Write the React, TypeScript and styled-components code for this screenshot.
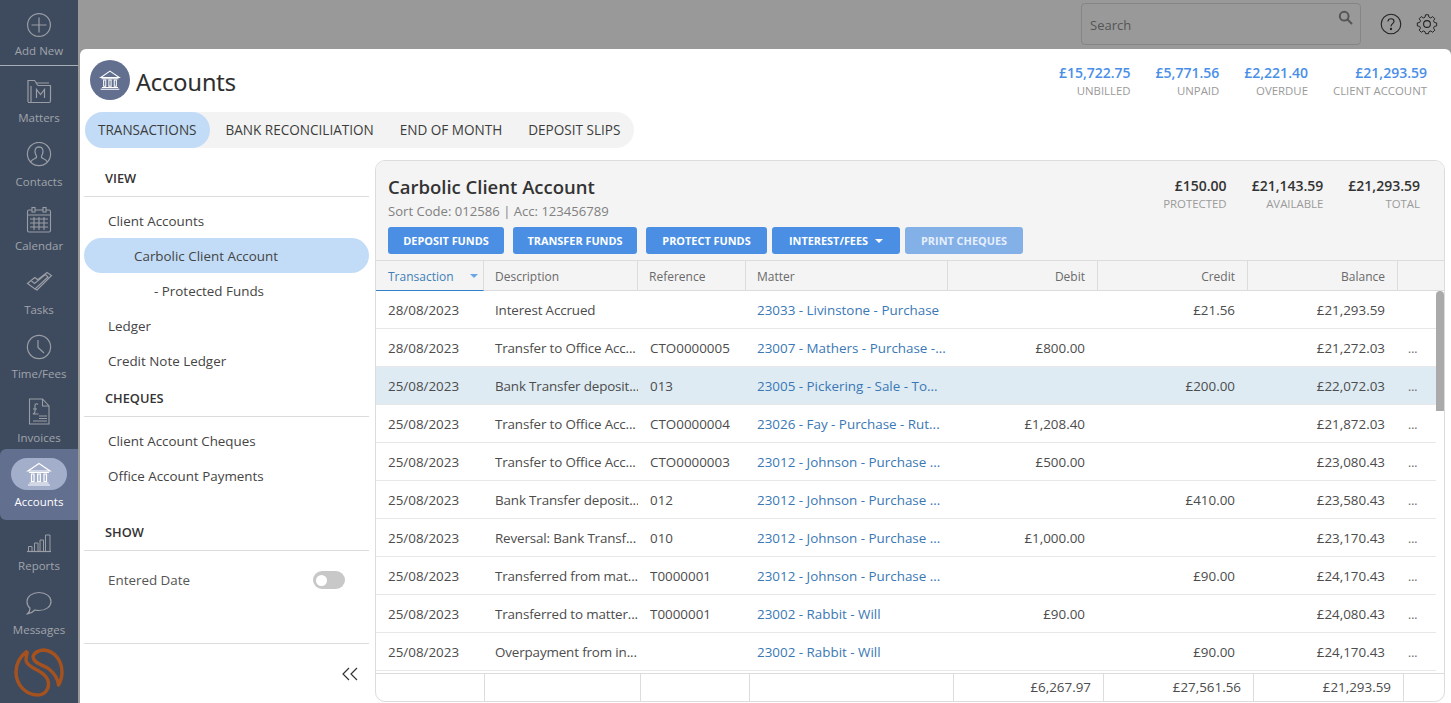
import React from 'react';
import styled, { createGlobalStyle } from 'styled-components';

const GlobalStyle = createGlobalStyle`
    html, body {
        margin: 0;
        padding: 0;
        height: 100%;
        overflow: hidden;
        background: #999;
    }
    * {
        box-sizing: border-box;
    }
    body {
        font-family: "Open Sans", "Noto Sans", "Liberation Sans", sans-serif;
        font-size: 13.4px;
        color: #444;
    }
`;

const Page = styled.div`
    display: flex;
    height: 703px;
    overflow: hidden;
    background: #999;
`;

const Sidebar = styled.nav`
    display: flex;
    flex-direction: column;
    flex: 0 0 78px;
    background: #3e4b5f;
`;

const NavItem = styled.div<{ $active?: boolean; $first?: boolean }>`
    display: flex;
    flex-direction: column;
    align-items: center;
    position: relative;
    height: ${p => (p.$first ? '66px' : p.$active ? '71px' : '64px')};
    padding-top: ${p => (p.$first ? '11px' : p.$active ? '9px' : '12px')};
    margin-top: ${p => (p.$active ? '-1px' : '0')};
    margin-bottom: ${p => (p.$active ? '-6px' : '0')};
    border-bottom: ${p => (p.$first ? '1px solid #a9aeb6' : 'none')};
    border-radius: ${p => (p.$active ? '6px 0 0 6px' : '0')};
    background: ${p => (p.$active ? '#626f8f' : 'transparent')};
    color: ${p => (p.$active ? '#fff' : '#a0a4aa')};
    font-weight: ${p => (p.$active ? 500 : 400)};
`;

const NavIcon = styled.div<{ $active?: boolean }>`
    display: flex;
    align-items: center;
    justify-content: center;
    width: 56px;
    height: ${p => (p.$active ? '32px' : '28px')};
    margin-bottom: 4px;
    border-radius: 16px;
    background: ${p => (p.$active ? '#a3aecb' : 'transparent')};
`;

const NavLabel = styled.div`
    font-size: 11.5px;
    line-height: 16px;
    white-space: nowrap;
`;

const Logo = styled.svg`
    display: block;
    width: 50px;
    height: 50px;
    margin: 6px auto 0;
`;

const Main = styled.div`
    display: flex;
    flex-direction: column;
    flex: 1;
    min-width: 0;
`;

const TopBar = styled.header`
    display: flex;
    align-items: center;
    justify-content: flex-end;
    flex: 0 0 49px;
    padding: 3px 12px 4px 0;
`;

const SearchBox = styled.div`
    position: relative;
    width: 280px;
    height: 42px;
    padding: 12px 8px 0;
    margin-right: 18px;
    border: 1px solid #858585;
    border-radius: 4px;
    color: #555;
    font-size: 13px;
    line-height: 18px;
`;

const SearchIcon = styled.svg`
    position: absolute;
    top: 6px;
    right: 7px;
    width: 15px;
    height: 15px;
`;

const TopIcon = styled.svg`
    display: block;
    width: 24px;
    height: 24px;
    & + & {
        margin-left: 12px;
    }
`;

const Panel = styled.main`
    display: flex;
    flex-direction: column;
    flex: 1;
    min-height: 0;
    margin-left: 2px;
    background: #fff;
    border-radius: 6px 6px 0 0;
`;

const PanelHead = styled.div`
    display: flex;
    justify-content: space-between;
    flex: 0 0 63px;
    padding: 11px 24px 0 10px;
`;

const TitleRow = styled.div`
    display: flex;
    align-items: center;
    height: 40px;
`;

const TitleBadge = styled.div`
    display: flex;
    align-items: center;
    justify-content: center;
    width: 40px;
    height: 40px;
    margin-right: 6px;
    border-radius: 50%;
    background: #626f8f;
`;

const Title = styled.h1`
    margin: 3px 0 0;
    font-size: 23.5px;
    font-weight: 400;
    color: #2b2b2b;
    -webkit-text-stroke: 0.2px #2b2b2b;
`;

const Stats = styled.div<{ $inCard?: boolean }>`
    display: flex;
    gap: 25px;
    margin-top: ${p => (p.$inCard ? '1px' : '3px')};
`;

const Stat = styled.div`
    text-align: right;
`;

const StatValue = styled.div<{ $dark?: boolean }>`
    font-size: 14px;
    line-height: 19px;
    font-weight: 600;
    color: ${p => (p.$dark ? '#333' : '#4a8fe7')};
`;

const StatLabel = styled.div`
    font-size: 11.4px;
    line-height: 17px;
    color: #9a9a9a;
    white-space: nowrap;
`;

const Tabs = styled.div`
    display: flex;
    align-self: flex-start;
    height: 36px;
    margin-left: 5px;
    padding-right: 1px;
    border-radius: 18px;
    background: #f3f3f3;
`;

const Tab = styled.div<{ $active?: boolean }>`
    display: flex;
    align-items: center;
    margin-right: ${p => (p.$active ? '3px' : '0')};
    padding: 0 13px;
    border-radius: 18px;
    background: ${p => (p.$active ? '#c2dcf7' : 'transparent')};
    color: #3c3c3c;
    font-size: 13.55px;
    white-space: nowrap;
`;

const Body = styled.div`
    display: flex;
    flex: 1;
    min-height: 0;
    padding: 12px 6px 1px 4px;
`;

const SideNav = styled.aside`
    display: flex;
    flex-direction: column;
    flex: 0 0 285px;
    margin-right: 6px;
    margin-bottom: -1px;
`;

const SectionHead = styled.div<{ $gap?: number }>`
    height: 37px;
    margin-top: ${p => p.$gap ?? 0}px;
    padding: 9px 0 0 21px;
    border-bottom: 1px solid #dcdcdc;
    color: #333;
    font-size: 12.8px;
    line-height: 18px;
    font-weight: 600;
`;

const SectionList = styled.div`
    padding-top: 6px;
`;

const SideLink = styled.div<{ $level?: number; $active?: boolean }>`
    display: flex;
    align-items: center;
    height: 35px;
    padding-left: ${p => [24, 50, 70][p.$level ?? 0]}px;
    border-radius: 18px;
    background: ${p => (p.$active ? '#c2dcf7' : 'transparent')};
    color: #444;
    font-size: 13.4px;
`;

const ToggleRow = styled.div`
    display: flex;
    align-items: center;
    justify-content: space-between;
    height: 46px;
    padding: 0 24px;
    color: #555;
    font-size: 13.4px;
`;

const Toggle = styled.div`
    display: flex;
    align-items: center;
    width: 32px;
    height: 18px;
    padding-left: 3px;
    border-radius: 9px;
    background: #c8c8c8;
    &::before {
        content: '';
        width: 11px;
        height: 11px;
        border-radius: 50%;
        background: #fff;
    }
`;

const SideFoot = styled.div`
    display: flex;
    align-items: center;
    justify-content: flex-end;
    margin-top: auto;
    height: 60px;
    padding: 0 10px 0 0;
    border-top: 1px solid #dcdcdc;
`;

const Card = styled.section`
    display: flex;
    flex-direction: column;
    flex: 1;
    min-width: 0;
    overflow: hidden;
    border: 1px solid #dcdcdc;
    border-radius: 10px;
`;

const CardHead = styled.div`
    display: flex;
    justify-content: space-between;
    flex: 0 0 99px;
    padding: 14px 24px 0 12px;
    background: #f4f4f4;
`;

const CardTitle = styled.h2`
    margin: 0;
    font-size: 18.5px;
    line-height: 24px;
    font-weight: 600;
    color: #333;
`;

const CardSub = styled.div`
    margin-top: 3px;
    color: #808080;
    font-size: 13.1px;
    line-height: 18px;
`;

const Buttons = styled.div`
    display: flex;
    margin-top: 7px;
`;

const ButtonGroup = styled.div<{ $gap: number }>`
    display: flex;
    gap: ${p => p.$gap}px;
    margin-right: 5px;
`;

const Button = styled.div<{ $w: number; $disabled?: boolean }>`
    display: flex;
    align-items: center;
    justify-content: center;
    width: ${p => p.$w}px;
    height: 27px;
    border-radius: 3px;
    background: ${p => (p.$disabled ? '#84b0e8' : '#4a8fe3')};
    color: ${p => (p.$disabled ? '#e6effb' : '#fff')};
    font-size: 10.9px;
    font-weight: 700;
    white-space: nowrap;
`;

const Caret = styled.span<{ $color: string }>`
    width: 0;
    height: 0;
    margin-left: 7px;
    border-left: 4px solid transparent;
    border-right: 4px solid transparent;
    border-top: 4px solid ${p => p.$color};
`;

const HeadRow = styled.div`
    display: grid;
    grid-template-columns: 108px 154px 108px 202px 150px 150px 150px 1fr;
    flex: 0 0 31px;
    background: #f4f4f4;
    border-top: 1px solid #dcdcdc;
    border-bottom: 1px solid #dcdcdc;
`;

const HeadCell = styled.div<{ $right?: boolean; $sorted?: boolean }>`
    display: flex;
    align-items: center;
    justify-content: ${p => (p.$right ? 'flex-end' : 'space-between')};
    margin-bottom: ${p => (p.$sorted ? '-1px' : '0')};
    padding: 1px ${p => (p.$sorted ? '5px' : '12px')} 0 ${p => (p.$sorted ? '12px' : '11px')};
    border-right: 1px solid #dcdcdc;
    border-bottom: ${p => (p.$sorted ? '1px solid #2f7fc9' : 'none')};
    color: ${p => (p.$sorted ? '#3f7fb8' : '#6a6a6a')};
    font-size: 12px;
`;

const Rows = styled.div`
    position: relative;
    flex: 1;
    min-height: 0;
    overflow: hidden;
    padding-right: 8px;
`;

const Thumb = styled.div`
    position: absolute;
    top: 0;
    right: 0;
    width: 8px;
    height: 120px;
    border-radius: 4px 4px 0 0;
    background: #aaa;
`;

const Row = styled.div<{ $selected?: boolean }>`
    display: grid;
    grid-template-columns: 107px 155px 107px 202px 150px 150px 150px 1fr;
    height: 38px;
    border-bottom: 1px solid #e8e8e8;
    background: ${p => (p.$selected ? '#deebf3' : 'transparent')};
`;

const Cell = styled.div<{ $right?: boolean; $link?: boolean; $tight?: boolean }>`
    overflow: hidden;
    padding: 0 ${p => (p.$right ? '12px' : '0')} 0 ${p => (p.$right ? '0' : '12px')};
    color: ${p => (p.$link ? '#3a78b5' : '#4c4c4c')};
    font-size: 13.4px;
    letter-spacing: ${p => (p.$tight ? '-0.14px' : '0')};
    line-height: 38px;
    text-align: ${p => (p.$right ? 'right' : 'left')};
    white-space: nowrap;
`;

const More = styled.div`
    padding-left: 11px;
    color: #666;
    font-size: 12px;
    line-height: 40px;
`;

const Footer = styled.div`
    display: grid;
    grid-template-columns: 109px 156px 109px 204px 150px 150px 150px 1fr;
    flex: 0 0 28px;
    border-top: 1px solid #dcdcdc;
`;

const FootCell = styled.div`
    padding-right: 12px;
    border-right: 1px solid #dcdcdc;
    color: #4c4c4c;
    font-size: 13.4px;
    line-height: 27px;
    text-align: right;
`;

type IconProps = { color?: string; size?: number };

const BankIcon = ({ color = '#fff', size = 26 }: IconProps) => (
    <svg width={size} height={size} viewBox="0 0 26 26" fill="none" stroke={color} strokeWidth="1.2">
        <path d="M13 2.5 L24 10 H2 Z" />
        <path d="M3 11.5 H23 M3.5 22 H22.5 M2 24 H24" />
        <path d="M5.5 13 V20.5 M8 13 V20.5 M11.7 13 V20.5 M14.3 13 V20.5 M18 13 V20.5 M20.5 13 V20.5 M5 13 H8.5 M11 13 H15 M17.5 13 H21 M5 20.5 H8.5 M11 20.5 H15 M17.5 20.5 H21" />
    </svg>
);

const stroke = '#9a9da3';

const icons: Record<string, React.ReactNode> = {
    add: (
        <svg width="28" height="28" viewBox="0 0 28 28" fill="none" stroke={stroke} strokeWidth="1.2">
            <circle cx="14" cy="14" r="11.4" />
            <path d="M14 6.5 V21.5 M6.5 14 H21.5" />
        </svg>
    ),
    matters: (
        <svg width="28" height="28" viewBox="0 0 28 28" fill="none" stroke={stroke} strokeWidth="1.2">
            <path d="M3 24 V2.5 H9.5 L11.5 5 H24" />
            <path d="M6 24.5 H24 Q25.5 24.5 25.5 23 V7.5 H13 L11 5" />
            <path d="M3 24.5 H6 V8" />
            <path d="M11.5 20 V11.5 L15.5 16.5 L19.5 11.5 V20" />
        </svg>
    ),
    contacts: (
        <svg width="28" height="28" viewBox="0 0 28 28" fill="none" stroke={stroke} strokeWidth="1.2">
            <g transform="translate(0 -2)">
                <circle cx="14" cy="14" r="11.6" />
                <path d="M5.5 22 C7 19 10.5 18.5 11.5 17.5 C12 16.5 11 15.5 10.5 14 C9.5 11 9.8 7 14 6.8 C18.2 7 18.5 11 17.5 14 C17 15.5 16 16.5 16.5 17.5 C17.5 18.5 21 19 22.5 22" />
            </g>
        </svg>
    ),
    calendar: (
        <svg width="28" height="28" viewBox="0 0 28 28" fill="none" stroke={stroke} strokeWidth="1.1">
            <rect x="2.5" y="4" width="23" height="22" rx="1.5" />
            <rect x="7" y="1.5" width="3" height="4.5" fill="#3e4b5f" />
            <rect x="18" y="1.5" width="3" height="4.5" fill="#3e4b5f" />
            <path d="M2.5 9 H25.5 M5 13 H23 M5 17 H23 M5 21 H23 M9 11 V24 M14 11 V24 M19 11 V24" />
        </svg>
    ),
    tasks: (
        <svg width="28" height="28" viewBox="0 0 28 28" fill="none" stroke={stroke} strokeWidth="1.2">
            <path d="M2.5 13.5 L6 10.5 L9.5 13.5 L20.5 4.5 L23 7 L10 19 Z" />
            <path d="M6.5 10 L10 7.5 L13 10" />
            <path d="M13 9.5 L22 2.5 L26.5 5.5 L12 20 L10 19" />
        </svg>
    ),
    time: (
        <svg width="28" height="28" viewBox="0 0 28 28" fill="none" stroke={stroke} strokeWidth="1.2">
            <circle cx="14" cy="13" r="11.6" />
            <path d="M13 6 V13.5 L19 19" />
        </svg>
    ),
    invoices: (
        <svg width="28" height="28" viewBox="0 0 28 28" fill="none" stroke={stroke} strokeWidth="1.1">
            <path d="M4.5 1 H17.5 L24 8 V26 H4.5 Z" />
            <path d="M17.5 1 V8 H24" />
            <path d="M14 18 H22 M14 20.5 H22 M8 23 H22" />
            <path d="M13 6.5 C11.5 5 9.5 6 10 8 L10 13.5 C10 15 9 15.5 8 16 H13.5 M8 11 H12" />
        </svg>
    ),
    reports: (
        <svg width="28" height="28" viewBox="0 0 28 28" fill="none" stroke={stroke} strokeWidth="1">
            <path d="M2 25.5 H26" strokeWidth="1.2" />
            <path d="M3.5 25 V20.5 H7 V25 M9.5 25 V17 H13 V25 M15 25 V14 H18.5 V25 M20.5 25 V9 H25 V25" />
        </svg>
    ),
    messages: (
        <svg width="28" height="28" viewBox="0 0 28 28" fill="none" stroke={stroke} strokeWidth="1.2">
            <path d="M14 2.5 C21 2.5 26 6.5 26 11.5 C26 16.5 21 20.5 14 20.5 C12.5 20.5 11 20.3 9.8 20 C8 22 5.5 23.5 2.5 23.8 C4.5 22 5 20.3 5 18.2 C3 16.5 2 14.2 2 11.5 C2 6.5 7 2.5 14 2.5 Z" />
        </svg>
    ),
};

const navItems = [
    { key: 'matters', label: 'Matters' },
    { key: 'contacts', label: 'Contacts' },
    { key: 'calendar', label: 'Calendar' },
    { key: 'tasks', label: 'Tasks' },
    { key: 'time', label: 'Time/Fees' },
    { key: 'invoices', label: 'Invoices' },
    { key: 'accounts', label: 'Accounts' },
    { key: 'reports', label: 'Reports' },
    { key: 'messages', label: 'Messages' },
];

const transactions = [
    ['28/08/2023', 'Interest Accrued', '', '23033 - Livinstone - Purchase', '', '£21.56', '£21,293.59', false],
    ['28/08/2023', 'Transfer to Office Acc...', 'CTO0000005', '23007 - Mathers - Purchase -...', '£800.00', '', '£21,272.03', true],
    ['25/08/2023', 'Bank Transfer deposit...', '013', '23005 - Pickering - Sale - To...', '', '£200.00', '£22,072.03', true],
    ['25/08/2023', 'Transfer to Office Acc...', 'CTO0000004', '23026 - Fay - Purchase - Rut...', '£1,208.40', '', '£21,872.03', true],
    ['25/08/2023', 'Transfer to Office Acc...', 'CTO0000003', '23012 - Johnson - Purchase ...', '£500.00', '', '£23,080.43', true],
    ['25/08/2023', 'Bank Transfer deposit...', '012', '23012 - Johnson - Purchase ...', '', '£410.00', '£23,580.43', true],
    ['25/08/2023', 'Reversal: Bank Transf...', '010', '23012 - Johnson - Purchase ...', '£1,000.00', '', '£23,170.43', true],
    ['25/08/2023', 'Transferred from mat...', 'T0000001', '23012 - Johnson - Purchase ...', '', '£90.00', '£24,170.43', true],
    ['25/08/2023', 'Transferred to matter...', 'T0000001', '23002 - Rabbit - Will', '£90.00', '', '£24,080.43', true],
    ['25/08/2023', 'Overpayment from in...', '', '23002 - Rabbit - Will', '', '£90.00', '£24,170.43', true],
] as const;

const App: React.FC = () => {
    return (
        <Page>
            <GlobalStyle />
            <Sidebar>
                <NavItem $first>
                    <NavIcon>{icons.add}</NavIcon>
                    <NavLabel>Add New</NavLabel>
                </NavItem>
                {navItems.map(item => {
                    const active = item.key === 'accounts';
                    return (
                        <NavItem key={item.key} $active={active}>
                            <NavIcon $active={active}>
                                {active ? <BankIcon size={26} /> : icons[item.key]}
                            </NavIcon>
                            <NavLabel>{item.label}</NavLabel>
                        </NavItem>
                    );
                })}
                <Logo viewBox="0 0 50 50" fill="none" stroke="#a5521f" strokeWidth="3.4" strokeLinejoin="round">
                    <path d="M13.5 3 C5 9 2 17 2 24 C2 37 12 47 24 47 C31 47 35 41 34.5 35 C34 29 29 25 23 22 C17 19 12 16 12 12 C12 8 13 5 13.5 3" />
                    <path d="M19 9 C20 4 26 2 30 2 C40 3 48 12 48 24 C48 29 47 33 44.5 37 C44 31 41 26 35 21 C30 17 20 16 19 9 Z" />
                </Logo>
            </Sidebar>
            <Main>
                <TopBar>
                    <SearchBox>
                        Search
                        <SearchIcon viewBox="0 0 15 15" fill="none" stroke="#555" strokeWidth="2">
                            <circle cx="6.2" cy="6.2" r="4.4" />
                            <path d="M9.5 9.5 L13.5 13.5" strokeLinecap="round" />
                        </SearchIcon>
                    </SearchBox>
                    <TopIcon viewBox="0 0 24 24" fill="none" stroke="#222" strokeWidth="1.1">
                        <circle cx="12" cy="12" r="9.8" />
                        <path d="M9 9.5 C9 7.5 10.5 6.7 12 6.7 C13.7 6.7 15 7.8 15 9.4 C15 11.6 12 11.8 12 14.5" />
                        <circle cx="12" cy="17" r="0.6" fill="#222" />
                    </TopIcon>
                    <TopIcon viewBox="0 0 24 24" fill="none" stroke="#222" strokeWidth="1.1">
                        <circle cx="12" cy="12" r="3.4" />
                        <path d="M10.3 2.5 h3.4 l0.5 2.7 2 0.9 2.3 -1.5 2.4 2.4 -1.5 2.3 0.9 2 2.7 0.5 v3.4 l-2.7 0.5 -0.9 2 1.5 2.3 -2.4 2.4 -2.3 -1.5 -2 0.9 -0.5 2.2 h-3.4 l-0.5 -2.2 -2 -0.9 -2.3 1.5 -2.4 -2.4 1.5 -2.3 -0.9 -2 -2.7 -0.5 v-3.4 l2.7 -0.5 0.9 -2 -1.5 -2.3 2.4 -2.4 2.3 1.5 2 -0.9 z" strokeLinejoin="round" transform="translate(12 12) scale(0.88) translate(-12 -13)" />
                    </TopIcon>
                </TopBar>
                <Panel>
                    <PanelHead>
                        <TitleRow>
                            <TitleBadge>
                                <BankIcon size={22} />
                            </TitleBadge>
                            <Title>Accounts</Title>
                        </TitleRow>
                        <Stats>
                            <Stat>
                                <StatValue>£15,722.75</StatValue>
                                <StatLabel>UNBILLED</StatLabel>
                            </Stat>
                            <Stat>
                                <StatValue>£5,771.56</StatValue>
                                <StatLabel>UNPAID</StatLabel>
                            </Stat>
                            <Stat>
                                <StatValue>£2,221.40</StatValue>
                                <StatLabel>OVERDUE</StatLabel>
                            </Stat>
                            <Stat>
                                <StatValue>£21,293.59</StatValue>
                                <StatLabel>CLIENT ACCOUNT</StatLabel>
                            </Stat>
                        </Stats>
                    </PanelHead>
                    <Tabs>
                        <Tab $active>TRANSACTIONS</Tab>
                        <Tab>BANK RECONCILIATION</Tab>
                        <Tab>END OF MONTH</Tab>
                        <Tab>DEPOSIT SLIPS</Tab>
                    </Tabs>
                    <Body>
                        <SideNav>
                            <SectionHead>VIEW</SectionHead>
                            <SectionList>
                                <SideLink>Client Accounts</SideLink>
                                <SideLink $level={1} $active>Carbolic Client Account</SideLink>
                                <SideLink $level={2}>- Protected Funds</SideLink>
                                <SideLink>Ledger</SideLink>
                                <SideLink>Credit Note Ledger</SideLink>
                            </SectionList>
                            <SectionHead $gap={2}>CHEQUES</SectionHead>
                            <SectionList>
                                <SideLink>Client Account Cheques</SideLink>
                                <SideLink>Office Account Payments</SideLink>
                            </SectionList>
                            <SectionHead $gap={21}>SHOW</SectionHead>
                            <SectionList>
                                <ToggleRow>
                                    Entered Date
                                    <Toggle />
                                </ToggleRow>
                            </SectionList>
                            <SideFoot>
                                <svg width="18" height="14" viewBox="0 0 18 14" fill="none" stroke="#333" strokeWidth="1.2">
                                    <path d="M8 1 L2 7 L8 13 M16 1 L10 7 L16 13" />
                                </svg>
                            </SideFoot>
                        </SideNav>
                        <Card>
                            <CardHead>
                                <div>
                                    <CardTitle>Carbolic Client Account</CardTitle>
                                    <CardSub>Sort Code: 012586 | Acc: 123456789</CardSub>
                                    <Buttons>
                                        <ButtonGroup $gap={9}>
                                            <Button $w={116}>DEPOSIT FUNDS</Button>
                                            <Button $w={124}>TRANSFER FUNDS</Button>
                                            <Button $w={121}>PROTECT FUNDS</Button>
                                        </ButtonGroup>
                                        <ButtonGroup $gap={5}>
                                            <Button $w={128}>
                                                INTEREST/FEES
                                                <Caret $color="#fff" />
                                            </Button>
                                            <Button $w={118} $disabled>PRINT CHEQUES</Button>
                                        </ButtonGroup>
                                    </Buttons>
                                </div>
                                <Stats $inCard>
                                    <Stat>
                                        <StatValue $dark>£150.00</StatValue>
                                        <StatLabel>PROTECTED</StatLabel>
                                    </Stat>
                                    <Stat>
                                        <StatValue $dark>£21,143.59</StatValue>
                                        <StatLabel>AVAILABLE</StatLabel>
                                    </Stat>
                                    <Stat>
                                        <StatValue $dark>£21,293.59</StatValue>
                                        <StatLabel>TOTAL</StatLabel>
                                    </Stat>
                                </Stats>
                            </CardHead>
                            <HeadRow>
                                <HeadCell $sorted>
                                    Transaction
                                    <Caret $color="#6aa5e8" />
                                </HeadCell>
                                <HeadCell>Description</HeadCell>
                                <HeadCell>Reference</HeadCell>
                                <HeadCell>Matter</HeadCell>
                                <HeadCell $right>Debit</HeadCell>
                                <HeadCell $right>Credit</HeadCell>
                                <HeadCell $right>Balance</HeadCell>
                            </HeadRow>
                            <Rows>
                                {transactions.map((t, i) => (
                                    <Row key={i} $selected={i === 2}>
                                        <Cell>{t[0]}</Cell>
                                        <Cell $tight>{t[1]}</Cell>
                                        <Cell>{t[2]}</Cell>
                                        <Cell $link>{t[3]}</Cell>
                                        <Cell $right>{t[4]}</Cell>
                                        <Cell $right>{t[5]}</Cell>
                                        <Cell $right>{t[6]}</Cell>
                                        {t[7] ? <More>...</More> : <More />}
                                    </Row>
                                ))}
                                <Thumb />
                            </Rows>
                            <Footer>
                                <FootCell />
                                <FootCell />
                                <FootCell />
                                <FootCell />
                                <FootCell>£6,267.97</FootCell>
                                <FootCell>£27,561.56</FootCell>
                                <FootCell>£21,293.59</FootCell>
                            </Footer>
                        </Card>
                    </Body>
                </Panel>
            </Main>
        </Page>
    );
};

export default App;
